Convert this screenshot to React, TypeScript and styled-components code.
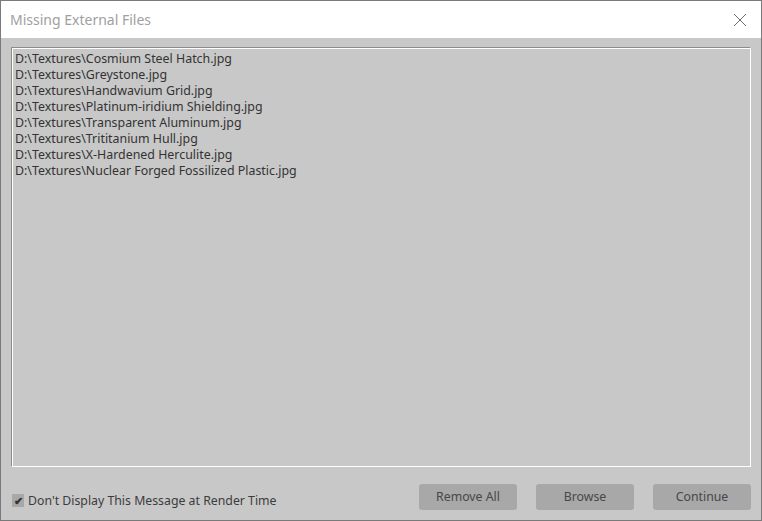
import styled, { createGlobalStyle } from "styled-components";

const GlobalStyle = createGlobalStyle`
  html, body {
    margin: 0;
    padding: 0;
    background: #c8c8c8;
  }
  * {
    box-sizing: border-box;
  }
`;

const files = [
  "D:\\Textures\\Cosmium Steel Hatch.jpg",
  "D:\\Textures\\Greystone.jpg",
  "D:\\Textures\\Handwavium Grid.jpg",
  "D:\\Textures\\Platinum-iridium Shielding.jpg",
  "D:\\Textures\\Transparent Aluminum.jpg",
  "D:\\Textures\\Trititanium Hull.jpg",
  "D:\\Textures\\X-Hardened Herculite.jpg",
  "D:\\Textures\\Nuclear Forged Fossilized Plastic.jpg",
];

const Window = styled.div`
  width: 762px;
  height: 521px;
  display: flex;
  flex-direction: column;
  border: 1px solid #7a7a7a;
  background: #c8c8c8;
  font-family: "Noto Sans", "Liberation Sans", sans-serif;
`;

const TitleBar = styled.div`
  height: 37px;
  flex: none;
  display: flex;
  align-items: center;
  justify-content: space-between;
  background: #ffffff;
  padding: 0 14px 0 9px;
`;

const Title = styled.span`
  font-size: 14px;
  color: #a0a0a0;
`;

const CloseButton = styled.button`
  border: none;
  background: transparent;
  padding: 0;
  width: 14px;
  height: 14px;
  display: flex;
  cursor: pointer;
`;

const Body = styled.div`
  flex: 1;
  display: flex;
  flex-direction: column;
  padding: 9px 10px 0 10px;
`;

const FileList = styled.ul`
  list-style: none;
  margin: 0;
  height: 420px;
  padding: 3px 3px;
  border: 1px solid #8c8c8c;
  border-right-color: #ffffff;
  border-bottom-color: #ffffff;
  box-shadow: inset 1px 1px 0 #ffffff;
`;

const FileItem = styled.li`
  font-size: 12.4px;
  line-height: 16px;
  color: #333333;
`;

const Footer = styled.div`
  flex: 1;
  display: flex;
  align-items: center;
  justify-content: space-between;
  padding: 6px 0 0 1px;
`;

const CheckLabel = styled.label`
  display: flex;
  align-items: center;
  gap: 4px;
  font-size: 12.3px;
  color: #3c3c3c;
  margin-top: 8px;
`;

const CheckBox = styled.span`
  width: 12px;
  height: 13px;
  display: flex;
  align-items: center;
  justify-content: center;
  background: #a8a8a8;
  color: #333333;
  font-size: 11px;
  font-weight: bold;
  line-height: 1;
`;

const Buttons = styled.div`
  display: flex;
  gap: 19px;
`;

const Button = styled.button`
  width: 98px;
  height: 26px;
  border: none;
  border-radius: 3px;
  background: #a8a8a8;
  color: #474747;
  font-family: inherit;
  font-size: 12.3px;
  padding: 0;
  cursor: pointer;
`;

export default function App() {
  return (
    <>
      <GlobalStyle />
      <Window>
        <TitleBar>
          <Title>Missing External Files</Title>
          <CloseButton aria-label="Close">
            <svg width="14" height="14" viewBox="0 0 14 14">
              <path d="M1 1 L13 13 M13 1 L1 13" stroke="#6a6a6a" strokeWidth="1" />
            </svg>
          </CloseButton>
        </TitleBar>
        <Body>
          <FileList>
            {files.map((f) => (
              <FileItem key={f}>{f}</FileItem>
            ))}
          </FileList>
          <Footer>
            <CheckLabel>
              <CheckBox>✔</CheckBox>
              Don't Display This Message at Render Time
            </CheckLabel>
            <Buttons>
              <Button>Remove All</Button>
              <Button>Browse</Button>
              <Button>Continue</Button>
            </Buttons>
          </Footer>
        </Body>
      </Window>
    </>
  );
}
